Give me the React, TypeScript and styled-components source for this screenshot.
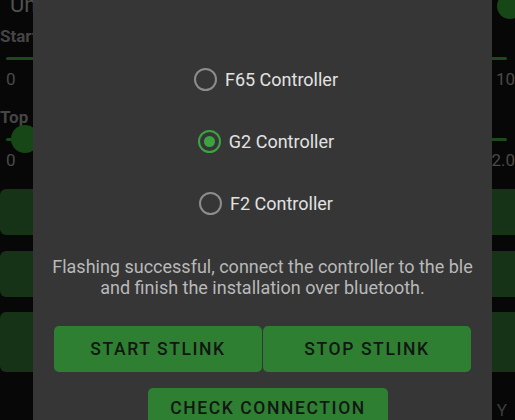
import React, { useState } from "react";
import styled, { createGlobalStyle } from "styled-components";

const Global = createGlobalStyle`
  html, body { margin: 0; padding: 0; background: #070707; }
  body { font-family: Roboto, "Noto Sans", sans-serif; }
  * { box-sizing: border-box; }
`;

const Screen = styled.div`
  position: relative;
  width: 515px;
  height: 420px;
  overflow: hidden;
  background: #070707;
`;

const AppPage = styled.div`
  display: flex;
  flex-direction: column;
  width: 515px;
  color: #4c4c4c;
`;

const TitleRow = styled.div`
  display: flex;
  justify-content: space-between;
  align-items: center;
  height: 18px;
  margin-top: -5px;
  padding-left: 10px;
  font-size: 22px;
  color: #505050;
`;

const SwitchThumb = styled.div`
  width: 26px;
  height: 26px;
  border-radius: 50%;
  background: #174617;
  margin-right: -8px;
  margin-top: 4px;
`;

const Label = styled.div<{ $mt: number }>`
  font-size: 17px;
  font-weight: 700;
  color: #454545;
  height: 22px;
  line-height: 22px;
  margin-top: ${(p) => p.$mt}px;
`;

const SliderRow = styled.div`
  position: relative;
  display: flex;
  align-items: center;
  height: 22px;
  padding: 0 8px 0 6px;
`;

const Track = styled.div`
  flex: 1;
  height: 3px;
  background: #1d4a1d;
  border-radius: 2px;
`;

const Thumb = styled.div`
  position: absolute;
  left: 11px;
  top: -3px;
  width: 28px;
  height: 28px;
  border-radius: 50%;
  background: #174617;
`;

const ValueRow = styled.div`
  display: flex;
  justify-content: space-between;
  padding: 0 0 0 6px;
  font-size: 17px;
  height: 20px;
  line-height: 20px;
  color: #4a4a4a;
`;

const Card = styled.div<{ $h: number; $mt: number }>`
  height: ${(p) => p.$h}px;
  margin-top: ${(p) => p.$mt}px;
  margin-right: -20px;
  border-radius: 6px;
  background: #173317;
`;

const BottomLabel = styled.div`
  text-align: right;
  padding-right: 8px;
  margin-top: 28px;
  font-size: 17px;
  line-height: 20px;
  color: #3c3c3c;
`;

const Dialog = styled.div`
  position: absolute;
  left: 33px;
  top: -40px;
  width: 459px;
  height: 520px;
  background: #363636;
  display: flex;
  flex-direction: column;
  align-items: center;
  padding: 108px 18px 0;
`;

const RadioGroup = styled.div`
  display: flex;
  flex-direction: column;
  align-items: center;
  gap: 39px;
  margin-left: 7px;
`;

const RadioRow = styled.label`
  display: flex;
  align-items: center;
  gap: 8px;
  height: 23px;
  cursor: pointer;
`;

const RadioCircle = styled.span<{ $checked: boolean }>`
  display: flex;
  align-items: center;
  justify-content: center;
  width: 23px;
  height: 23px;
  border-radius: 50%;
  border: 2px solid ${(p) => (p.$checked ? "#3da342" : "#8c8c8c")};
  &::after {
    content: "";
    width: 11px;
    height: 11px;
    border-radius: 50%;
    background: ${(p) => (p.$checked ? "#3da342" : "transparent")};
  }
`;

const RadioText = styled.span`
  font-size: 18px;
  color: #e2e2e2;
`;

const Message = styled.p`
  margin: 42px 0 0;
  font-size: 18px;
  line-height: 20.5px;
  color: #b9b9b9;
  text-align: center;
  white-space: nowrap;
`;

const ButtonRow = styled.div`
  display: flex;
  gap: 1px;
  margin-top: 28px;
  width: 417px;
`;

const ActionButton = styled.button<{ $w?: number }>`
  flex: ${(p) => (p.$w ? "none" : "1")};
  width: ${(p) => (p.$w ? `${p.$w}px` : "auto")};
  height: 46px;
  border: none;
  border-radius: 5px;
  background: #2f7f33;
  color: #111811;
  font-family: Roboto, "Noto Sans", sans-serif;
  font-size: 17.5px;
  font-weight: 500;
  letter-spacing: 1.6px;
  cursor: pointer;
`;

const CheckButton = styled(ActionButton)`
  margin-top: 16px;
  margin-left: 11px;
  padding: 0 0 6px;
`;

const options = ["F65 Controller", "G2 Controller", "F2 Controller"];

export default function App() {
  const [selected, setSelected] = useState(1);
  return (
    <Screen>
      <Global />
      <AppPage>
        <TitleRow>
          <span>Un</span>
          <SwitchThumb />
        </TitleRow>
        <Label $mt={12}>Start</Label>
        <SliderRow>
          <Track />
        </SliderRow>
        <ValueRow>
          <span>0</span>
          <span>10</span>
        </ValueRow>
        <Label $mt={17}>Top Speed</Label>
        <SliderRow>
          <Track />
          <Thumb />
        </SliderRow>
        <ValueRow>
          <span>0</span>
          <span>2.0</span>
        </ValueRow>
        <Card $h={46} $mt={19} />
        <Card $h={46} $mt={16} />
        <Card $h={60} $mt={15} />
        <BottomLabel>Y</BottomLabel>
      </AppPage>
      <Dialog>
        <RadioGroup>
          {options.map((o, i) => (
            <RadioRow key={o} onClick={() => setSelected(i)}>
              <RadioCircle $checked={selected === i} />
              <RadioText>{o}</RadioText>
            </RadioRow>
          ))}
        </RadioGroup>
        <Message>
          Flashing successful, connect the controller to the ble
          <br />
          and finish the installation over bluetooth.
        </Message>
        <ButtonRow>
          <ActionButton>START STLINK</ActionButton>
          <ActionButton>STOP STLINK</ActionButton>
        </ButtonRow>
        <CheckButton $w={240}>CHECK CONNECTION</CheckButton>
      </Dialog>
    </Screen>
  );
}
